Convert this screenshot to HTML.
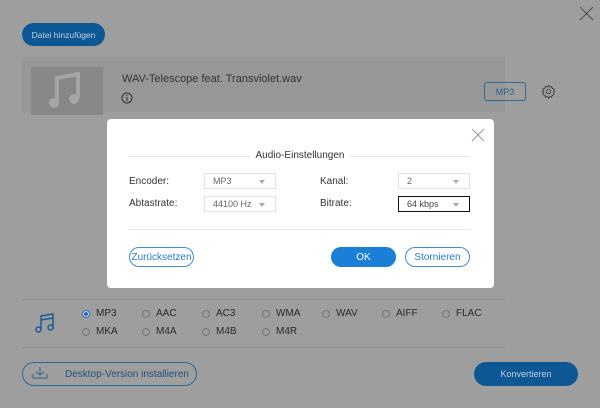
<!DOCTYPE html>
<html><head><meta charset="utf-8"><style>
*{margin:0;padding:0;box-sizing:border-box}
body{width:600px;height:408px;background:#9e9e9e;font-family:"Liberation Sans",sans-serif;position:relative;overflow:hidden;color:#222}
.a{position:absolute}
.btnb{background:#0d5894;color:#c0cfe0;border-radius:12px;font-size:8.5px;display:flex;align-items:center;justify-content:center}
.row{left:22px;top:57px;width:483px;height:55px;background:#979797}
.sel{border:1px solid #e2e2e2;height:16px;font-size:9px;color:#666;padding:2px 8px;background:#fff}
.sel:after{content:"";position:absolute;right:10px;top:6px;border:3px solid transparent;border-top:4px solid #aaa}
.lbl{font-size:10px;color:#333}
.ob{border:1px solid #3a8fd8;color:#2a7ccc;border-radius:10px;font-size:10px;display:flex;align-items:center;justify-content:center;height:20px}
.r{font-size:10px;color:#2a2a2a;display:flex;align-items:center}
.r i{display:inline-block;width:8px;height:8px;border:1px solid #777;border-radius:50%;margin-right:6px}
</style></head><body>
<svg class="a" style="left:579px;top:6px" width="15" height="15"><path d="M1 1L14 14M14 1L1 14" stroke="#555" stroke-width="1.2"/></svg>
<div class="a btnb" style="left:22px;top:23px;width:83px;height:23px">Datei hinzufügen</div>
<div class="a row"></div>
<div class="a" style="left:31px;top:67px;width:72px;height:48px;background:#878787"></div>
<svg class="a" style="left:48px;top:72px" width="36" height="38"><path d="M9 30V6L30 2V26" stroke="#a5a5a5" stroke-width="4" fill="none"/><circle cx="6" cy="31" r="5" fill="#a5a5a5"/><circle cx="26" cy="27" r="5" fill="#a5a5a5"/></svg>
<div class="a" style="left:122px;top:73px;font-size:11px;color:#333">WAV-Telescope feat. Transviolet.wav</div>
<svg class="a" style="left:121px;top:92px" width="12" height="12"><circle cx="6" cy="6" r="5" stroke="#333" fill="none"/><path d="M6 5V9M6 3V4" stroke="#333"/></svg>
<div class="a" style="left:484px;top:82px;width:42px;height:19px;border:1px solid #2d6a9a;border-radius:3px;font-size:9px;color:#2d5f8a;display:flex;align-items:center;justify-content:center">MP3</div>
<svg class="a" style="left:541px;top:84px" width="15" height="15" viewBox="0 0 24 24"><path d="M12 2l2 3 3-1 1 3 3 1-1 3 2 1-2 2 1 3-3 1-1 3-3-1-2 3-2-3-3 1-1-3-3-1 1-3-2-2 2-1-1-3 3-1 1-3 3 1z" fill="none" stroke="#444" stroke-width="1.5"/><circle cx="12" cy="12" r="3.5" fill="none" stroke="#444" stroke-width="1.5"/></svg>

<div class="a" style="left:107px;top:119px;width:387px;height:169px;background:#fff;border-radius:4px"></div>
<svg class="a" style="left:471px;top:128px" width="14" height="14"><path d="M1 1L13 13M13 1L1 13" stroke="#999" stroke-width="1"/></svg>
<div class="a" style="left:128px;top:156px;width:122px;height:1px;background:#e5e5e5"></div>
<div class="a" style="left:350px;top:156px;width:120px;height:1px;background:#e5e5e5"></div>
<div class="a" style="left:252px;top:150px;width:96px;text-align:center;font-size:10px;color:#333">Audio-Einstellungen</div>
<div class="a lbl" style="left:129px;top:176px">Encoder:</div>
<div class="a sel" style="left:204px;top:173px;width:72px">MP3</div>
<div class="a lbl" style="left:320px;top:176px">Kanal:</div>
<div class="a sel" style="left:398px;top:173px;width:72px">2</div>
<div class="a lbl" style="left:129px;top:198px">Abtastrate:</div>
<div class="a sel" style="left:204px;top:196px;width:72px">44100 Hz</div>
<div class="a lbl" style="left:320px;top:198px">Bitrate:</div>
<div class="a sel" style="left:398px;top:196px;width:72px;border-color:#111;color:#444">64 kbps</div>
<div class="a" style="left:128px;top:229px;width:342px;height:1px;background:#e8e8e8"></div>
<div class="a ob" style="left:129px;top:247px;width:65px">Zurücksetzen</div>
<div class="a" style="left:331px;top:247px;width:65px;height:20px;border-radius:10px;background:#1a7fd6;color:#fff;font-size:10px;display:flex;align-items:center;justify-content:center">OK</div>
<div class="a ob" style="left:405px;top:247px;width:65px">Stornieren</div>

<div class="a" style="left:22px;top:299px;width:483px;height:1px;background:#8d8d8d"></div>
<svg class="a" style="left:34px;top:312px" width="22" height="22"><path d="M7 17V4L19 2V15" stroke="#1f5b93" stroke-width="1.5" fill="none"/><path d="M7 8L19 6" stroke="#1f5b93" stroke-width="1.5"/><circle cx="4.5" cy="17.5" r="2.5" stroke="#1f5b93" stroke-width="1.5" fill="none"/><circle cx="16.5" cy="15.5" r="2.5" stroke="#1f5b93" stroke-width="1.5" fill="none"/></svg>
<div class="a r" style="left:82px;top:308px"><i style="border-color:#2a6cc0;background:radial-gradient(#2a6cc0 45%,#ddd 50%)"></i>MP3</div>
<div class="a r" style="left:142px;top:308px"><i></i>AAC</div>
<div class="a r" style="left:202px;top:308px"><i></i>AC3</div>
<div class="a r" style="left:262px;top:308px"><i></i>WMA</div>
<div class="a r" style="left:322px;top:308px"><i></i>WAV</div>
<div class="a r" style="left:382px;top:308px"><i></i>AIFF</div>
<div class="a r" style="left:442px;top:308px"><i></i>FLAC</div>
<div class="a r" style="left:82px;top:326px"><i></i>MKA</div>
<div class="a r" style="left:142px;top:326px"><i></i>M4A</div>
<div class="a r" style="left:202px;top:326px"><i></i>M4B</div>
<div class="a r" style="left:262px;top:326px"><i></i>M4R</div>
<div class="a" style="left:22px;top:347px;width:483px;height:1px;background:#8d8d8d"></div>
<div class="a" style="left:22px;top:362px;width:175px;height:24px;border:1px solid #2d6a9a;border-radius:12px;font-size:10px;color:#24507a;padding:6px 0 0 42px">Desktop-Version installieren</div>
<svg class="a" style="left:32px;top:366px" width="16" height="14"><path d="M8 1V9M4 6L8 9L12 6M1 8V12H15V8" stroke="#2d5f8a" fill="none"/></svg>
<div class="a btnb" style="left:474px;top:362px;width:104px;height:24px;font-size:9px">Konvertieren</div>
</body></html>
